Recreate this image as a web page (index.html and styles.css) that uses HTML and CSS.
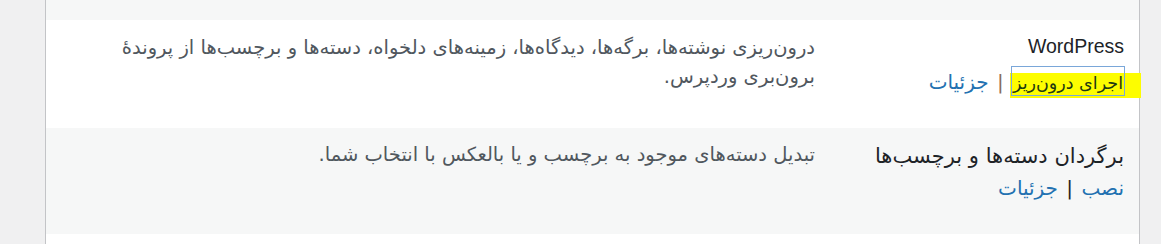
FILE: index.html
```html
<!DOCTYPE html>
<html lang="fa" dir="rtl">
  <head>
    <meta charset="UTF-8" />
    <title>درون‌ریزی</title>
    <link rel="stylesheet" href="styles.css">
  </head>
  <body>
    <div class="wrap">
      <table class="importers">
        <tr class="prev-row"><td colspan="2"></td></tr>
        <tr>
          <td class="import-system">
            <div class="importer-title">WordPress</div>
            <div class="row-actions">
              <a href="#" class="run-importer">اجرای درون‌ریز</a>
              <span class="sep">|</span>
              <a href="#">جزئیات</a>
            </div>
          </td>
          <td class="desc">درون‌ریزی نوشته‌ها، برگه‌ها، دیدگاه‌ها، زمینه‌های دلخواه، دسته‌ها و برچسب‌ها از پروندهٔ برون‌بری وردپرس.</td>
        </tr>
        <tr class="alternate">
          <td class="import-system">
            <div class="importer-title">برگردان دسته‌ها و برچسب‌ها</div>
            <div class="row-actions">
              <a href="#">نصب</a>
              <span class="sep dark">|</span>
              <a href="#">جزئیات</a>
            </div>
          </td>
          <td class="desc">تبدیل دسته‌های موجود به برچسب و یا بالعکس با انتخاب شما.</td>
        </tr>
        <tr class="next-row"><td colspan="2"></td></tr>
      </table>
    </div>
  </body>
</html>
```

FILE: styles.css
```css
body {
  margin: 0;
  background-color: #f0f0f1;
  font-family: "DejaVu Sans", sans-serif;
  color: #50575e;
}

.wrap {
  padding: 0 21px 0 45px;
}

.importers {
  width: 100%;
  border-collapse: collapse;
  background-color: white;
  border-left: 1px solid #c3c4c7;
  border-right: 1px solid #c3c4c7;
}

.importers td {
  padding: 0;
  vertical-align: top;
  text-align: right;
}

.prev-row td {
  height: 20px;
  background-color: #f6f7f7;
}

.next-row td {
  height: 10px;
}

.alternate td {
  background-color: #f6f7f7;
}

.import-system {
  width: 299px;
  padding: 12px 15px 0 10px !important;
  height: 96px;
}

.alternate .import-system {
  height: 94px;
}

.importer-title {
  font-family: "Liberation Sans", "DejaVu Sans", sans-serif;
  font-size: 19.5px;
  line-height: 29px;
  color: #1d2327;
}

.alternate .importer-title {
  font-family: "DejaVu Sans", sans-serif;
  font-size: 21px;
  line-height: 30px;
  margin-top: 1px;
}

.row-actions {
  margin-top: 6px;
  font-size: 20px;
  line-height: 26px;
}

.alternate .row-actions {
  margin-top: 4px;
}

.row-actions a {
  color: #2271b1;
  text-decoration: none;
}

.sep {
  color: #8a6d5a;
  margin: 0 2px;
}

.sep.dark {
  color: #1d2327;
}

.run-importer {
  display: inline-block;
  position: relative;
  z-index: 0;
  font-size: 17.5px;
  line-height: 22px;
  color: #1f3a12 !important;
  outline: 1px solid #7aa7d9;
  padding: 5px 1px 1px 1px;
}

.run-importer::before {
  content: "";
  position: absolute;
  z-index: -1;
  top: 6px;
  bottom: -3px;
  left: -2px;
  right: -17px;
  background-color: #fdfd00;
}

.desc {
  padding: 13px 0 0 60px !important;
  font-size: 19.5px;
  line-height: 29px;
}

.alternate .desc {
  padding-top: 12px !important;
}
```
